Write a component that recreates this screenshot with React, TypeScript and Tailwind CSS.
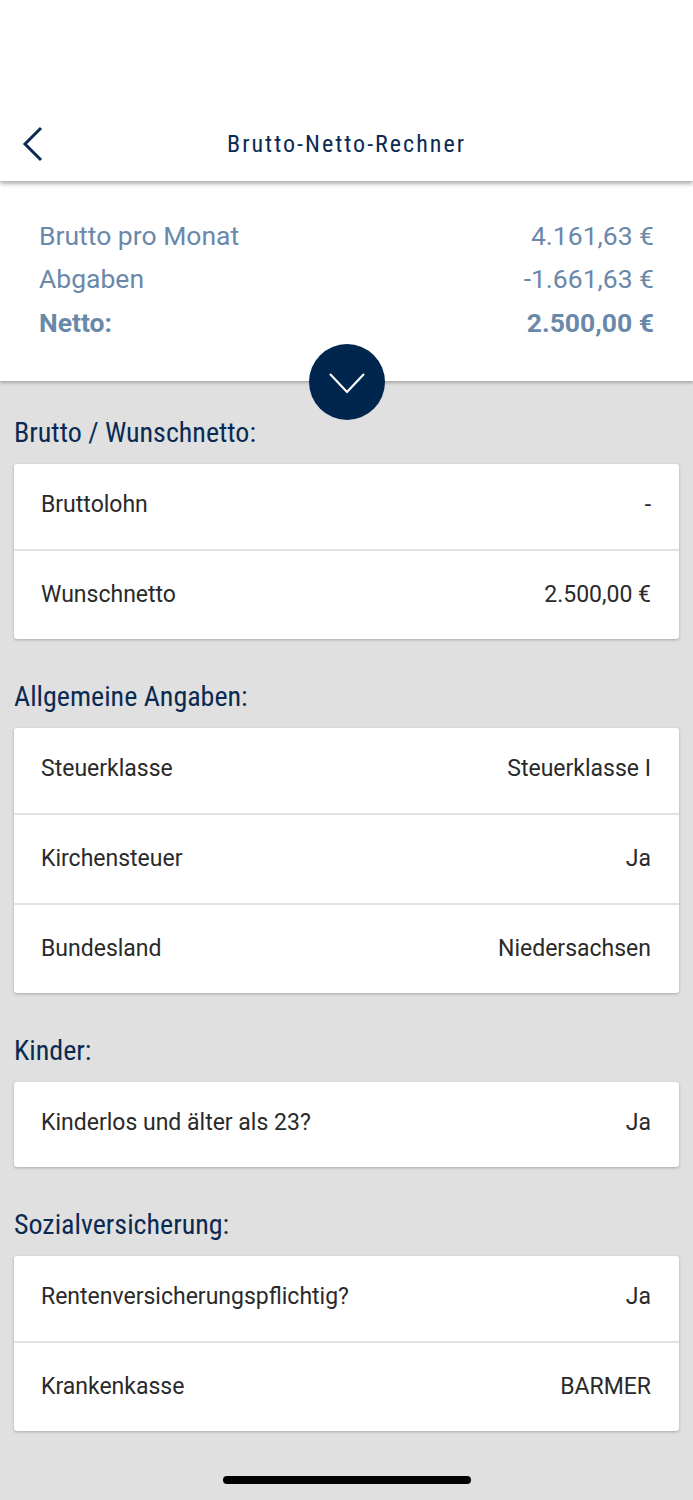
import React from 'react';

type Row = { label: string; value: string };

const sections: { title: string; rows: Row[] }[] = [
  {
    title: 'Brutto / Wunschnetto:',
    rows: [
      { label: 'Bruttolohn', value: '-' },
      { label: 'Wunschnetto', value: '2.500,00 €' },
    ],
  },
  {
    title: 'Allgemeine Angaben:',
    rows: [
      { label: 'Steuerklasse', value: 'Steuerklasse I' },
      { label: 'Kirchensteuer', value: 'Ja' },
      { label: 'Bundesland', value: 'Niedersachsen' },
    ],
  },
  {
    title: 'Kinder:',
    rows: [{ label: 'Kinderlos und älter als 23?', value: 'Ja' }],
  },
  {
    title: 'Sozialversicherung:',
    rows: [
      { label: 'Rentenversicherungspflichtig?', value: 'Ja' },
      { label: 'Krankenkasse', value: 'BARMER' },
    ],
  },
];

const condensed = "font-['Roboto_Condensed','Liberation_Sans_Narrow','DejaVu_Sans_Condensed',sans-serif]";

export default function App() {
  return (
    <div className="min-h-[1500px] bg-[#e0e0e0] font-['Roboto','Liberation_Sans',sans-serif]">
      {/* header */}
      <div className="relative z-20 bg-white h-[181px] pt-[104px] shadow-[0_3px_4px_rgba(0,0,0,0.3)]">
        <div className="relative flex h-[78px] items-center justify-center">
          <svg className="absolute left-[22px] top-[22px]" width="22" height="36" viewBox="0 0 22 36" fill="none">
            <path d="M19 2 L3 18 L19 34" stroke="#0b2a52" strokeWidth="3" />
          </svg>
          <h1 className={`${condensed} text-[24px] tracking-[2px] text-[#0b2a52] mt-[1px]`}>Brutto-Netto-Rechner</h1>
        </div>
      </div>

      {/* summary */}
      <div className="relative z-10 bg-white h-[200px] px-[39px] pt-[33px] shadow-[0_2px_3px_rgba(0,0,0,0.25)] text-[#6a88aa] text-[26.5px]">
        <div className="flex justify-between h-[43px] items-center">
          <span>Brutto pro Monat</span>
          <span>4.161,63 €</span>
        </div>
        <div className="flex justify-between h-[44px] items-center">
          <span>Abgaben</span>
          <span>-1.661,63 €</span>
        </div>
        <div className="flex justify-between h-[44px] items-center font-bold">
          <span>Netto:</span>
          <span>2.500,00 €</span>
        </div>
        <div className="absolute left-1/2 -translate-x-1/2 bottom-[-39px] w-[76px] h-[76px] rounded-full bg-[#00264d] flex items-center justify-center">
          <svg width="38" height="24" viewBox="0 0 38 24" fill="none" className="mt-[2px]">
            <path d="M2 3 L19 21 L36 3" stroke="white" strokeWidth="2.2" />
          </svg>
        </div>
      </div>

      {/* sections */}
      <div className="px-[14px] pt-[36px] pb-[45px]">
        {sections.map((s, i) => (
          <div key={i} className={i > 0 ? 'mt-[42px]' : ''}>
            <h2 className={`${condensed} text-[28px] leading-[32px] text-[#0b2a52] mb-[15px]`}>{s.title}</h2>
            <div className="bg-white rounded-[3px] shadow-[0_1px_3px_rgba(0,0,0,0.25)] text-[#2a2a2a] text-[23px]">
              {s.rows.map((r, j) => (
                <div
                  key={j}
                  className={`flex justify-between items-center pl-[27px] pr-[28px] ${j > 0 ? 'border-t-2 border-[#e2e2e2] h-[90px]' : 'h-[85px] pb-[2px]'}`}
                >
                  <span>{r.label}</span>
                  <span>{r.value}</span>
                </div>
              ))}
            </div>
          </div>
        ))}
      </div>

      {/* home indicator */}
      <div className="flex justify-center">
        <div className="w-[248px] h-[8px] rounded-full bg-black" />
      </div>
    </div>
  );
}
